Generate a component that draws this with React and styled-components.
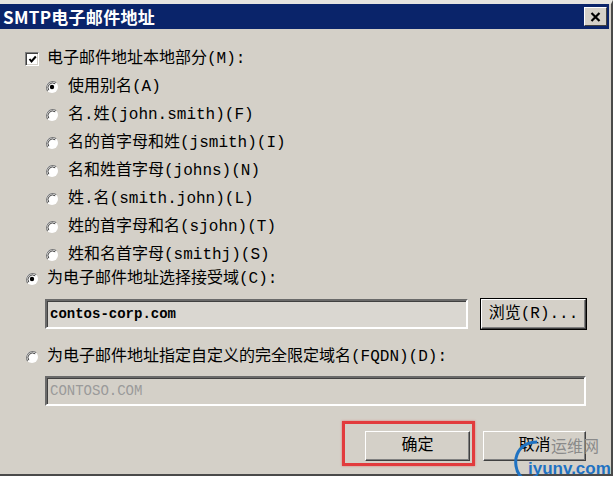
import styled, { createGlobalStyle } from "styled-components";

const GlobalStyle = createGlobalStyle`
  body {
    margin: 0;
    background: #ffffff;
    font-family: "Liberation Mono", "Noto Sans CJK SC", monospace;
  }
`

const Window = styled.div`
  position: relative;
  width: 611px;
  display: flex;
  flex-direction: column;
  background: #d4d0c8;
  border-top: 4px solid #e6e4df;
  border-right: 2px solid #4a4a4a;
  border-bottom: 2px solid #4a4a4a;
`

const TitleBar = styled.div`
  height: 25px;
  margin-right: 2px;
  background: #0a246a;
  display: flex;
  align-items: center;
  justify-content: space-between;
  padding-left: 3px;
`

const Title = styled.span`
  color: #ffffff;
  font-family: "Noto Sans CJK SC", sans-serif;
  font-weight: 700;
  font-size: 17px;
  line-height: 25px;
  letter-spacing: 0.3px;
`

const CloseButton = styled.div`
  width: 21px;
  height: 17px;
  margin-right: 2px;
  background: #d4d0c8;
  border: 1px solid;
  border-color: #ffffff #404040 #404040 #ffffff;
  display: flex;
  align-items: center;
  justify-content: center;
`

const Body = styled.div`
  display: flex;
  flex-direction: column;
  padding: 16px 25px 13px 25px;
`

const Row = styled.div`
  height: ${(p) => p.$h || 28}px;
  margin-left: ${(p) => p.$indent || 0}px;
  margin-top: ${(p) => p.$mt || 0}px;
  display: flex;
  align-items: center;
  gap: ${(p) => (p.$indent ? 9 : 8)}px;
`

const Label = styled.span`
  font-size: 16px;
  line-height: 20px;
  color: #000000;
  white-space: nowrap;
`

const CheckBox = styled.span`
  width: 12px;
  height: 12px;
  flex: none;
  background: #ffffff;
  border: 1px solid;
  border-color: #808080 #ffffff #ffffff #808080;
  box-shadow: inset 1px 1px #404040, inset -1px -1px #d4d0c8;
  display: flex;
  align-items: center;
  justify-content: center;
`

const FieldRow = styled.div`
  margin-left: 20px;
  margin-top: ${(p) => p.$mt || 0}px;
  display: flex;
  gap: 13px;
`

const TextBox = styled.div`
  flex: 1;
  height: 26px;
  padding-left: 3px;
  display: flex;
  align-items: center;
  background: ${(p) => (p.$disabled ? "#d4d0c8" : "#dad7d1")};
  border: 2px solid;
  border-color: #6a6a6a #ffffff #ffffff #6a6a6a;
  box-shadow: inset 1px 1px #404040;
  font-family: "Liberation Mono", monospace;
  font-size: 14px;
  font-weight: ${(p) => (p.$disabled ? 400 : 700)};
  color: ${(p) => (p.$disabled ? "#9a9a9a" : "#000000")};
`

const Button = styled.div`
  width: ${(p) => p.$w}px;
  height: 28px;
  box-sizing: content-box;
  display: flex;
  align-items: center;
  justify-content: center;
  background: #d4d0c8;
  border: 1px solid;
  border-color: #ffffff #404040 #404040 #ffffff;
  box-shadow: inset -1px -1px #808080;
  outline: ${(p) => (p.$focus ? "1px solid #000" : "none")};
  font-size: 16px;
  line-height: 20px;
  color: #000000;
`

const Actions = styled.div`
  margin-top: 25px;
  display: flex;
  justify-content: flex-end;
  gap: 13px;
`

const Highlight = styled.div`
  position: relative;
  &::after {
    content: "";
    position: absolute;
    left: -23px;
    top: -10px;
    right: -5px;
    bottom: -5px;
    border: 3px solid #e23b3d;
    box-shadow: 0 0 2px rgba(226, 59, 61, 0.6);
    pointer-events: none;
  }
`

const Watermark = styled.div`
  position: absolute;
  right: 0;
  bottom: -8px;
  width: 100px;
  height: 46px;
  pointer-events: none;
`

const WmSite = styled.span`
  position: absolute;
  left: 40px;
  top: 1px;
  font-family: "Noto Sans CJK SC", sans-serif;
  font-size: 16px;
  line-height: 16px;
  color: #8a8a8a;
`

const WmDomain = styled.span`
  position: absolute;
  left: 17px;
  top: 25px;
  font-family: "Liberation Sans", sans-serif;
  font-weight: 700;
  font-size: 17px;
  line-height: 16px;
  color: #1f72c2;
`

const Radio = ({ checked }) => (
  <svg width="14" height="14" viewBox="0 0 14 14" style={{ flex: "none" }}>
    <circle cx="7" cy="7" r="6" fill="#fff" />
    <path d="M11.2 2.8 A6 6 0 0 0 2.8 11.2" stroke="#7a7a7a" strokeWidth="1.2" fill="none" />
    <path d="M10.2 3.8 A4.6 4.6 0 0 0 3.8 10.2" stroke="#404040" fill="none" />
    {checked && <circle cx="7" cy="7" r="2.2" fill="#000" />}
  </svg>
)

const subOptions = [
  "使用别名(A)",
  "名.姓(john.smith)(F)",
  "名的首字母和姓(jsmith)(I)",
  "名和姓首字母(johns)(N)",
  "姓.名(smith.john)(L)",
  "姓的首字母和名(sjohn)(T)",
  "姓和名首字母(smithj)(S)",
]

const App = () => {
  return (
    <>
      <GlobalStyle />
      <Window>
        <TitleBar>
          <Title>SMTP电子邮件地址</Title>
          <CloseButton>
            <svg width="11" height="10" viewBox="0 0 11 10">
              <path d="M1.5 1 L9.5 9 M9.5 1 L1.5 9" stroke="#000" strokeWidth="2.2" />
            </svg>
          </CloseButton>
        </TitleBar>
        <Body>
          <Row>
            <CheckBox>
              <svg width="9" height="9" viewBox="0 0 9 9">
                <path d="M1.5 4 L3.5 6.5 L7.8 1.5" stroke="#000" strokeWidth="2" fill="none" />
              </svg>
            </CheckBox>
            <Label>电子邮件地址本地部分(M):</Label>
          </Row>
          {subOptions.map((text, i) => (
            <Row key={text} $indent={20}>
              <Radio checked={i === 0} />
              <Label>{text}</Label>
            </Row>
          ))}
          <Row $h={20}>
            <Radio checked />
            <Label>为电子邮件地址选择接受域(C):</Label>
          </Row>
          <FieldRow $mt={10}>
            <TextBox>contos-corp.com</TextBox>
            <Button $w={103} $focus>浏览(R)...</Button>
          </FieldRow>
          <Row $h={20} $mt={18}>
            <Radio />
            <Label>为电子邮件地址指定自定义的完全限定域名(FQDN)(D):</Label>
          </Row>
          <FieldRow $mt={9}>
            <TextBox $disabled>CONTOSO.COM</TextBox>
          </FieldRow>
          <Actions>
            <Highlight>
              <Button $w={103}>确定</Button>
            </Highlight>
            <Button $w={101}>取消</Button>
          </Actions>
        </Body>
        <Watermark>
          <svg width="30" height="46" viewBox="0 0 30 46" style={{ position: "absolute", left: 0, top: 0 }}>
            <path d="M26 6 C12 6 3 16 5 30 C6 37 10 42 16 45" stroke="#1f72c2" strokeWidth="3" fill="none" />
          </svg>
          <WmSite>运维网</WmSite>
          <WmDomain>iyunv.com</WmDomain>
        </Watermark>
      </Window>
    </>
  )
}

export default App
